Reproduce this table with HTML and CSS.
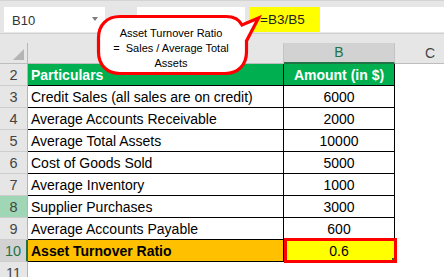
FILE: index.html
```html
<!DOCTYPE html>
<html>
<head>
<meta charset="utf-8">
<link rel="stylesheet" href="styles.css">
</head>
<body>
<div class="app">
  <div class="toolbar">
    <div class="namebox"><span>B10</span><span class="caret"></span></div>
    <div class="fxbox"></div>
    <div class="formula"><span class="hl">=B3/B5</span></div>
  </div>
  <div class="spacer"></div>
  <div class="sheet">
    <div class="corner"><span class="tri"></span></div>
    <div class="colhead"></div>
    <div class="colhead sel">B</div>
    <div class="colhead last">C</div>

    <div class="rh">2</div>
    <div class="c hdr">Particulars</div>
    <div class="c hdr num">Amount (in $)</div>
    <div class="e"></div>

    <div class="rh">3</div>
    <div class="c">Credit Sales (all sales are on credit)</div>
    <div class="c num">6000</div>
    <div class="e"></div>

    <div class="rh">4</div>
    <div class="c">Average Accounts Receivable</div>
    <div class="c num">2000</div>
    <div class="e"></div>

    <div class="rh">5</div>
    <div class="c">Average Total Assets</div>
    <div class="c num">10000</div>
    <div class="e"></div>

    <div class="rh">6</div>
    <div class="c">Cost of Goods Sold</div>
    <div class="c num">5000</div>
    <div class="e"></div>

    <div class="rh">7</div>
    <div class="c">Average Inventory</div>
    <div class="c num">1000</div>
    <div class="e"></div>

    <div class="rh hi">8</div>
    <div class="c">Supplier Purchases</div>
    <div class="c num">3000</div>
    <div class="e"></div>

    <div class="rh">9</div>
    <div class="c">Average Accounts Payable</div>
    <div class="c num">600</div>
    <div class="e"></div>

    <div class="rh sel">10</div>
    <div class="c tot">Asset Turnover Ratio</div>
    <div class="c num res">0.6</div>
    <div class="e"></div>

    <div class="rh">11</div>
    <div class="e"></div>
    <div class="e"></div>
    <div class="e"></div>
  </div>

  <div class="callout">
    <svg class="bubble" width="180" height="74" viewBox="90 8 180 74">
      <path d="M 120 16.5 H 226 C 234 16.5 239 19 242 25 L 258.5 18 L 246.5 41 V 52 C 246.5 65 238 73.5 225 73.5 H 120 C 107 73.5 98.5 65 98.5 52 V 38 C 98.5 25 107 16.5 120 16.5 Z" fill="#fff" stroke="#ff0000" stroke-width="3.2" stroke-miterlimit="12"/>
    </svg>
    <div class="callout-text">
      <div>Asset Turnover Ratio</div>
      <div class="pre">=  Sales / Average Total</div>
      <div>Assets</div>
    </div>
  </div>
</div>
</body>
</html>
```

FILE: styles.css
```css
html, body {
  margin: 0;
  padding: 0;
  background: #ffffff;
}

body {
  font-family: "Liberation Sans", Arial, sans-serif;
}

.app {
  position: relative;
  width: 444px;
  height: 277px;
  overflow: hidden;
  background: #e6e6e6;
}

.toolbar {
  display: flex;
  align-items: flex-start;
  height: 34px;
  box-sizing: border-box;
  padding-top: 6px;
  border-top: 1px solid #d4d4d4;
  border-bottom: 1px solid #d0d0d0;
}

.namebox {
  margin-left: 4px;
  width: 101px;
  height: 25px;
  box-sizing: border-box;
  padding: 1px 7px 0 8px;
  background: #ffffff;
  display: flex;
  align-items: center;
  justify-content: space-between;
  font-size: 13px;
  color: #333333;
}

.caret {
  width: 0;
  height: 0;
  border-left: 3.5px solid transparent;
  border-right: 3.5px solid transparent;
  border-top: 4px solid #7d7d7d;
  margin-top: -2px;
}

.fxbox {
  margin-left: 32px;
  width: 108px;
  height: 25px;
  background: #ffffff;
}

.formula {
  margin-left: 4px;
  flex: 1;
  height: 25px;
  background: #ffffff;
}

.hl {
  display: inline-block;
  width: 71px;
  height: 25px;
  box-sizing: border-box;
  padding: 1px 0 0 11px;
  background: #ffff00;
  font-size: 13.5px;
  line-height: 24px;
  color: #222222;
  vertical-align: top;
}

.spacer {
  height: 9px;
}

.sheet {
  display: grid;
  grid-template-columns: 28px 256px 111px 70px;
  grid-template-rows: 21px repeat(10, 22px);
  background: #ffffff;
  width: 465px;
}

.corner {
  position: relative;
  background: #e6e6e6;
  border-right: 1px solid #b8b8b8;
  border-bottom: 1px solid #bdbdbd;
}

.tri {
  position: absolute;
  right: 3px;
  bottom: 3px;
  width: 0;
  height: 0;
  border-left: 11px solid transparent;
  border-bottom: 11px solid #b4b4b4;
}

.colhead {
  background: #e6e6e6;
  border-right: 1px solid #c4c4c4;
  border-bottom: 1px solid #bdbdbd;
  text-align: center;
  font-size: 14px;
  line-height: 20px;
  color: #444444;
}

.colhead.sel {
  background: #d2d2d2;
  color: #217346;
  border-bottom: 2px solid #217346;
  line-height: 19px;
}

.colhead.last {
  border-right: none;
}

.rh {
  background: #e6e6e6;
  border-right: 1px solid #b4b4b4;
  border-bottom: 1px solid #cdcdcd;
  text-align: center;
  font-size: 14.5px;
  line-height: 21px;
  padding-top: 1px;
  color: #444444;
}

.rh.hi {
  background: #9fd6b6;
}

.rh.sel {
  background: #d2d2d2;
  color: #217346;
  border-right: 2px solid #217346;
}

.c {
  border-right: 1px solid #000000;
  border-bottom: 1px solid #000000;
  font-size: 14px;
  line-height: 20px;
  padding: 1px 0 0 3px;
  white-space: nowrap;
  color: #000000;
}

.num {
  text-align: center;
  padding-left: 0;
}

.hdr {
  background: #00b050;
  color: #ffffff;
  font-weight: bold;
}

.tot {
  background: #ffc000;
  font-weight: bold;
}

.res {
  position: relative;
  background: #ffff00;
}

.res::after {
  content: "";
  position: absolute;
  left: 0;
  right: -3px;
  top: -2px;
  bottom: -2px;
  border: 3px solid #ff0000;
  z-index: 2;
}

.res::before {
  content: "";
  position: absolute;
  right: 0;
  bottom: 1px;
  width: 2px;
  height: 2px;
  background: #217346;
  z-index: 3;
}

.e {
  background: #ffffff;
}

.callout {
  position: absolute;
  left: 90px;
  top: 8px;
  width: 180px;
  height: 74px;
  z-index: 5;
}

.bubble {
  display: block;
}

.callout-text {
  position: absolute;
  left: 10px;
  top: 18px;
  width: 142px;
  text-align: center;
  font-size: 11px;
  line-height: 15px;
  color: #000000;
}

.pre {
  white-space: pre;
}
```
